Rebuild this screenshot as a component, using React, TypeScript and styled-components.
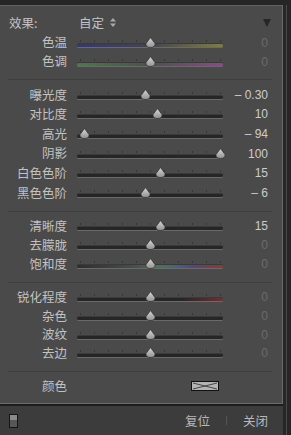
import React from "react";
import styled, { createGlobalStyle } from "styled-components";

type SliderDef = {
  label: string;
  value: number;
  max: number;
  text: string;
  track?: string;
};

const GlobalStyle = createGlobalStyle`
  html, body {
    margin: 0;
    padding: 0;
    background: #262626;
  }
  * {
    box-sizing: border-box;
  }
`;

const Frame = styled.div`
  display: flex;
  width: 291px;
  height: 435px;
  padding-top: 5px;
  background: #262626;
  font-family: "Noto Sans CJK SC", "Liberation Sans", sans-serif;
  color: #c2c2c2;
`;

const Column = styled.div`
  flex: 1;
  display: flex;
  flex-direction: column;
`;

const Gutter = styled.div`
  width: 8px;
  display: flex;
  padding-left: 3px;
`;

const GutterLine = styled.div`
  width: 1px;
  background: #4a4a4a;
`;

const Panel = styled.div`
  flex: 1;
  background: #4a4a4a;
  border-top: 1px solid #626262;
  border-right: 1px solid #6a6a6a;
  border-bottom: 1px solid #6a6a6a;
  display: flex;
  flex-direction: column;
`;

const Header = styled.div`
  display: flex;
  align-items: center;
  height: 21px;
  margin-top: 6px;
  padding: 0 11px 0 9px;
  font-size: 12.5px;
`;

const HeaderLabel = styled.span`
  width: 70px;
`;

const Preset = styled.span`
  display: flex;
  align-items: center;
  gap: 6px;
  flex: 1;
`;

const Section = styled.div<{ $rowH: number }>`
  display: flex;
  flex-direction: column;
  & > * {
    height: ${({ $rowH }) => $rowH}px;
  }
`;

const Divider = styled.div`
  height: 1px;
  margin: 8px 10px 5px 8px;
  background: #3f3f3f;
`;

const Row = styled.div`
  display: grid;
  grid-template-columns: 67px 146px 35px;
  column-gap: 10px;
  align-items: center;
`;

const Label = styled.span`
  text-align: right;
  font-size: 12.5px;
  line-height: 1;
  white-space: nowrap;
`;

const Slider = styled.div`
  position: relative;
  display: flex;
  flex-direction: column;
  gap: 2px;
  padding-top: 1px;
`;

const Ticks = styled.div`
  height: 2px;
  width: 141px;
  margin-left: 3px;
  background: repeating-linear-gradient(
    to right,
    #363636 0 1px,
    transparent 1px 14px
  );
`;

const Track = styled.div<{ $bg?: string }>`
  height: 3px;
  border-radius: 2px;
  background: ${({ $bg }) => $bg ?? "#262626"};
  box-shadow: 0 1px 0 #6a6a6a, 0 -1px 0 #3a3a3a;
`;

const Thumb = styled.svg`
  position: absolute;
  top: -2px;
  width: 11px;
  height: 11px;
  margin-left: -5.5px;
`;

const Value = styled.span<{ $dim: boolean }>`
  text-align: right;
  font-family: "Liberation Sans", sans-serif;
  font-size: 12px;
  color: ${({ $dim }) => ($dim ? "#6a6a6a" : "#cccccc")};
  white-space: pre;
`;

const SwatchCell = styled.div`
  display: flex;
  justify-content: flex-end;
  padding-right: 4px;
`;

const Swatch = styled.svg`
  width: 28px;
  height: 10px;
  display: block;
`;

const Footer = styled.div`
  height: 31px;
  border-top: 2px solid #1c1c1c;
  background: #3c3c3c;
  display: flex;
  align-items: center;
  padding: 0 15px 0 9px;
  font-size: 12.5px;
`;

const ToggleIcon = styled.div`
  width: 9px;
  height: 14px;
  border: 1px solid #151515;
  background: linear-gradient(to bottom, #8a8a8a 0 45%, #575757 45% 100%);
`;

const FooterActions = styled.div`
  margin-left: auto;
  display: flex;
  align-items: center;
  gap: 16px;
`;

const FooterButton = styled.span`
  color: #b8b8b8;
`;

const Sep = styled.span`
  width: 1px;
  height: 9px;
  background: #555555;
`;

const ExpandIcon = () => (
  <svg width="8" height="8" viewBox="0 0 8 8">
    <path d="M0 0 H8 L4 8 Z" fill="#262626" />
  </svg>
);

const StepperIcon = () => (
  <svg width="6" height="9" viewBox="0 0 6 9">
    <path d="M3 0 L6 3.5 H0 Z M0 5.5 H6 L3 9 Z" fill="#a8a8a8" />
  </svg>
);

const ThumbShape = ({ x }: { x: number }) => (
  <Thumb viewBox="0 0 11 11" style={{ left: x }}>
    <defs>
      <linearGradient id="tg" x1="0" y1="0" x2="0" y2="1">
        <stop offset="0" stopColor="#d8d8d8" />
        <stop offset="1" stopColor="#909090" />
      </linearGradient>
    </defs>
    <path
      d="M5.5 0.5 L10 6.5 Q10.5 10.5 5.5 10.5 Q0.5 10.5 1 6.5 Z"
      fill="url(#tg)"
      stroke="#2a2a2a"
      strokeWidth="0.7"
    />
  </Thumb>
);

const SliderRow = ({ label, value, max, text, track }: SliderDef) => {
  const x = 73 + (value / max) * 70;
  return (
    <Row>
      <Label>{label}</Label>
      <Slider>
        <Ticks />
        <Track $bg={track} />
        <ThumbShape x={x} />
      </Slider>
      <Value $dim={value === 0}>{text}</Value>
    </Row>
  );
};

const white: SliderDef[] = [
  {
    label: "色温",
    value: 0,
    max: 100,
    text: "0",
    track: "linear-gradient(to right, #36386c, #44444e 50%, #7e7d46)",
  },
  {
    label: "色调",
    value: 0,
    max: 100,
    text: "0",
    track: "linear-gradient(to right, #467c46, #4a524a 50%, #924592)",
  },
];

const tone: SliderDef[] = [
  { label: "曝光度", value: -0.3, max: 5, text: "– 0.30" },
  { label: "对比度", value: 10, max: 100, text: "10" },
  { label: "高光", value: -94, max: 100, text: "– 94" },
  { label: "阴影", value: 100, max: 100, text: "100" },
  { label: "白色色阶", value: 15, max: 100, text: "15" },
  { label: "黑色色阶", value: -6, max: 100, text: "– 6" },
];

const presence: SliderDef[] = [
  { label: "清晰度", value: 15, max: 100, text: "15" },
  { label: "去朦胧", value: 0, max: 100, text: "0" },
  {
    label: "饱和度",
    value: 0,
    max: 100,
    text: "0",
    track:
      "linear-gradient(to right, #2e2e2e, #46504a 40%, #447a4c 55%, #446284 68%, #54448a 80%, #843a46 92%, #923636)",
  },
];

const detail: SliderDef[] = [
  {
    label: "锐化程度",
    value: 0,
    max: 100,
    text: "0",
    track: "linear-gradient(to right, #262626 0 72%, #6c3232)",
  },
  { label: "杂色", value: 0, max: 100, text: "0" },
  { label: "波纹", value: 0, max: 100, text: "0" },
  { label: "去边", value: 0, max: 100, text: "0" },
];

export default function App() {
  return (
    <>
      <GlobalStyle />
      <Frame>
        <Column>
          <Panel>
            <Header>
              <HeaderLabel>效果:</HeaderLabel>
              <Preset>
                自定
                <StepperIcon />
              </Preset>
              <ExpandIcon />
            </Header>
            <Section $rowH={19}>
              {white.map((s) => (
                <SliderRow key={s.label} {...s} />
              ))}
            </Section>
            <Divider />
            <Section $rowH={19.6}>
              {tone.map((s) => (
                <SliderRow key={s.label} {...s} />
              ))}
            </Section>
            <Divider />
            <Section $rowH={19}>
              {presence.map((s) => (
                <SliderRow key={s.label} {...s} />
              ))}
            </Section>
            <Divider />
            <Section $rowH={18.8}>
              {detail.map((s) => (
                <SliderRow key={s.label} {...s} />
              ))}
            </Section>
            <Divider />
            <Section $rowH={19}>
              <Row>
                <Label>颜色</Label>
                <SwatchCell>
                  <Swatch viewBox="0 0 28 10">
                    <rect x="0.5" y="0.5" width="27" height="9" fill="#b4b4b4" stroke="#111" />
                    <path d="M2 2 L14 5 L26 2 M2 8 L14 5 L26 8" stroke="#3a3a3a" strokeWidth="0.9" fill="none" />
                  </Swatch>
                </SwatchCell>
              </Row>
            </Section>
          </Panel>
          <Footer>
            <ToggleIcon />
            <FooterActions>
              <FooterButton>复位</FooterButton>
              <Sep />
              <FooterButton>关闭</FooterButton>
            </FooterActions>
          </Footer>
        </Column>
        <Gutter>
          <GutterLine />
        </Gutter>
      </Frame>
    </>
  );
}
